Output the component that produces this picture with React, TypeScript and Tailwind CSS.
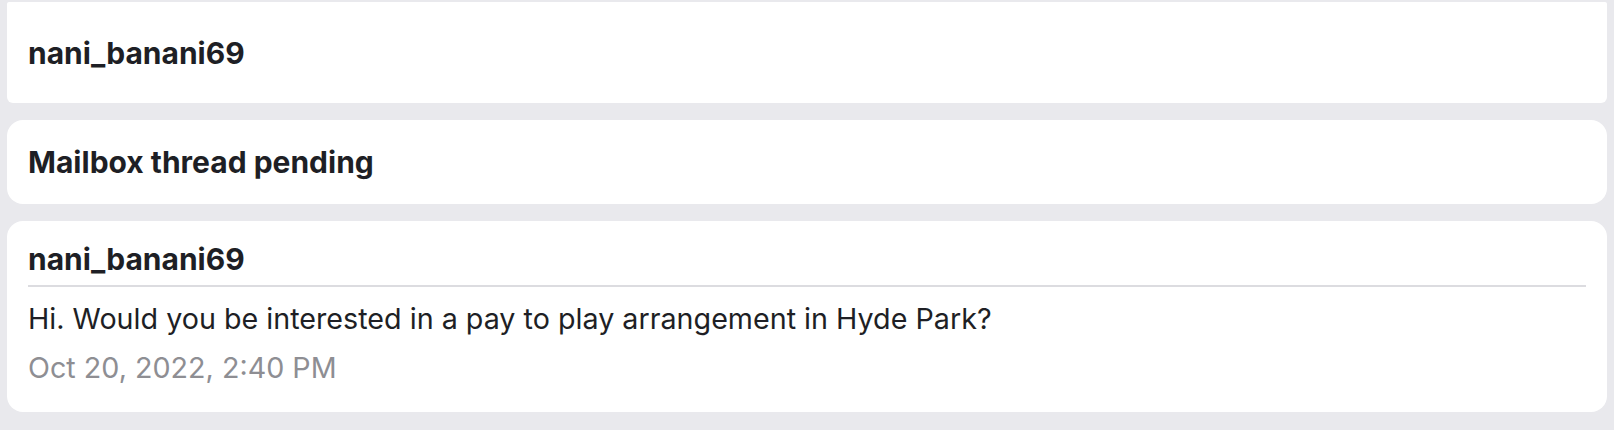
export default function App() {
  return (
    <div className="min-h-[430px] w-full bg-[#e9e9ed] px-[7px] pt-[2px] pb-[18px] flex flex-col gap-[17px] font-['Inter',sans-serif] text-[#1e1f25]">
      <div className="h-[101px] bg-white rounded-t-[2px] rounded-b-[6px] px-[21px] flex items-center">
        <div className="text-[30px] leading-[34px] font-bold">nani_banani69</div>
      </div>
      <div className="h-[84px] bg-white rounded-[16px] px-[21px] flex items-center">
        <div className="text-[30px] leading-[34px] font-bold">Mailbox thread pending</div>
      </div>
      <div className="bg-white rounded-[16px] px-[21px] pt-[21px] pb-[27px] flex flex-col">
        <div className="text-[30px] leading-[34px] font-bold pb-[9px] border-b-2 border-[#dcdce0]">nani_banani69</div>
        <div className="mt-[15px] text-[28.7px] leading-[34px]">Hi. Would you be interested in a pay to play arrangement in Hyde Park?</div>
        <div className="mt-[15px] text-[28.7px] leading-[34px] text-[#8e8e93]">Oct 20, 2022, 2:40 PM</div>
      </div>
    </div>
  );
}
